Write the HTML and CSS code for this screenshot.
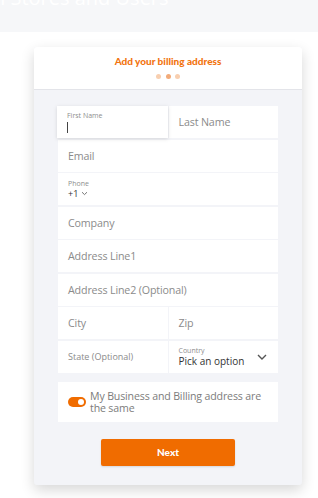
FILE: index.html
```html
<!DOCTYPE html>
<html>
<head>
<meta charset="utf-8">
<link rel="stylesheet" href="styles.css">
</head>
<body>
<div class="topband"><div class="toptext">n Stores and Users</div></div>
<div class="card">
  <div class="card-head">
    <div class="title">Add your billing address</div>
    <div class="dots"><span class="dot"></span><span class="dot active"></span><span class="dot"></span></div>
  </div>
  <div class="card-body">
    <div class="form">
      <div class="row two">
        <div class="field focused">
          <div class="small-label">First Name</div>
          <div class="caret"></div>
        </div>
        <div class="field"><span class="ph">Last Name</span></div>
      </div>
      <div class="row"><div class="field"><span class="ph">Email</span></div></div>
      <div class="row">
        <div class="field stacked">
          <div class="small-label">Phone</div>
          <div class="value">+1 <svg class="mini-chev" width="7" height="5" viewBox="0 0 7 5"><path d="M1 1.2 L3.5 3.6 L6 1.2" fill="none" stroke="#666" stroke-width="0.9"/></svg></div>
        </div>
      </div>
      <div class="row"><div class="field"><span class="ph">Company</span></div></div>
      <div class="row"><div class="field"><span class="ph">Address Line1</span></div></div>
      <div class="row"><div class="field"><span class="ph">Address Line2 (Optional)</span></div></div>
      <div class="row two">
        <div class="field"><span class="ph">City</span></div>
        <div class="field"><span class="ph">Zip</span></div>
      </div>
      <div class="row two">
        <div class="field"><span class="ph small">State (Optional)</span></div>
        <div class="field stacked select">
          <div>
            <div class="small-label">Country</div>
            <div class="value big">Pick an option</div>
          </div>
          <svg class="chev" width="10" height="6" viewBox="0 0 10 6"><path d="M1 1 L5 5 L9 1" fill="none" stroke="#555" stroke-width="1.4"/></svg>
        </div>
      </div>
    </div>
    <div class="same-box">
      <span class="toggle"><span class="knob"></span></span>
      <span class="same-text">My Business and Billing address are the same</span>
    </div>
    <button class="next">Next</button>
  </div>
</div>
</body>
</html>
```

FILE: styles.css
```css
* { box-sizing: border-box; }
html, body { margin: 0; padding: 0; background: #ffffff; }
body { font-family: "Open Sans", "Noto Sans", sans-serif; width: 318px; height: 498px; overflow: hidden; }

.topband { height: 32px; background: #f6f7f9; overflow: hidden; }
.toptext { color: #ffffff; font-size: 20px; line-height: 20px; margin-top: -12px; margin-left: -7px; white-space: nowrap; font-family: "Open Sans", sans-serif; }

.card { margin: 15px 0 0 34px; width: 268px; background: #f3f4f8; border-radius: 3px; box-shadow: 0 5px 14px rgba(0,0,0,0.16); overflow: hidden; }
.card-head { background: #ffffff; height: 43px; border-bottom: 1px solid #e3e4e9; display: flex; flex-direction: column; align-items: center; padding-top: 8px; }
.title { font-family: "Lato", sans-serif; font-weight: 900; font-size: 10px; color: #f27410; line-height: 12px; }
.dots { display: flex; gap: 4.5px; margin-top: 7px; }
.dot { width: 5px; height: 5px; border-radius: 50%; background: #f8cfb0; }
.dot.active { background: #f2ab7a; }

.card-body { padding: 16px 24px 19px; display: flex; flex-direction: column; }
.form { display: flex; flex-direction: column; gap: 1.5px; }
.row { display: grid; grid-template-columns: 1fr; gap: 1px; height: 32px; }
.row.two { grid-template-columns: 1fr 1fr; }
.field { min-width: 0; background: #ffffff; display: flex; align-items: center; padding-left: 10px; position: relative; }
.field.focused { box-shadow: 0 1px 4px rgba(0,0,0,0.13); z-index: 1; flex-direction: column; align-items: flex-start; justify-content: flex-start; padding-top: 5px; margin-left: -1px; }
.ph { font-size: 10.7px; letter-spacing: -0.15px; color: #8b8b8b; white-space: nowrap; }
.ph.small { font-size: 9px; letter-spacing: 0; }
.small-label { font-size: 7px; color: #8e8e8e; line-height: 9px; }
.caret { width: 1px; height: 11px; background: #444; margin-top: 2px; }
.field.stacked { flex-direction: column; align-items: flex-start; justify-content: center; }
.value { font-size: 9px; color: #333; line-height: 12px; display: flex; align-items: center; gap: 3px; }
.value.big { font-size: 10px; }
.field.select { flex-direction: row; align-items: center; justify-content: space-between; padding-right: 11px; }
.chev { display: block; }

.same-box { margin-top: 9px; height: 40px; background: #ffffff; display: flex; align-items: center; padding-left: 10px; padding-right: 6px; gap: 4px; }
.toggle { width: 18px; height: 10px; border-radius: 5px; background: #f06c00; position: relative; flex: none; }
.knob { position: absolute; right: 2px; top: 2px; width: 6px; height: 6px; border-radius: 50%; background: #ffffff; }
.same-text { font-size: 10.6px; letter-spacing: -0.15px; color: #7c7c7c; line-height: 12px; }

.next { align-self: center; margin-top: 17px; width: 134px; height: 27px; background: #f06c00; border: none; border-radius: 2px; color: #ffffff; font-family: "Lato", sans-serif; font-weight: 900; font-size: 10px; box-shadow: 0 1px 2px rgba(0,0,0,0.12); }
```
